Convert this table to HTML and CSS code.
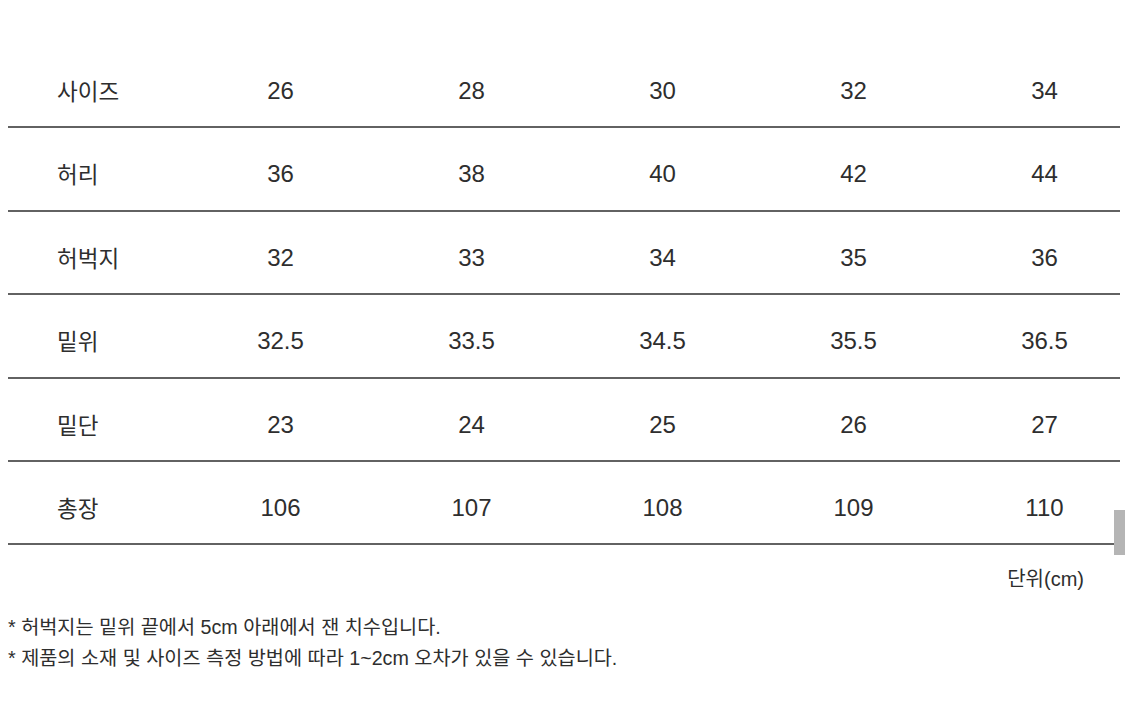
FILE: index.html
```html
<!DOCTYPE html>
<html lang="ko">
<head>
<meta charset="utf-8">
<link rel="stylesheet" href="styles.css">
</head>
<body>
<div class="page">
  <div class="table">
    <div class="row"><div class="label">사이즈</div><div class="cell">26</div><div class="cell">28</div><div class="cell">30</div><div class="cell">32</div><div class="cell">34</div></div>
    <div class="row"><div class="label">허리</div><div class="cell">36</div><div class="cell">38</div><div class="cell">40</div><div class="cell">42</div><div class="cell">44</div></div>
    <div class="row"><div class="label">허벅지</div><div class="cell">32</div><div class="cell">33</div><div class="cell">34</div><div class="cell">35</div><div class="cell">36</div></div>
    <div class="row"><div class="label">밑위</div><div class="cell">32.5</div><div class="cell">33.5</div><div class="cell">34.5</div><div class="cell">35.5</div><div class="cell">36.5</div></div>
    <div class="row"><div class="label">밑단</div><div class="cell">23</div><div class="cell">24</div><div class="cell">25</div><div class="cell">26</div><div class="cell">27</div></div>
    <div class="row"><div class="label">총장</div><div class="cell">106</div><div class="cell">107</div><div class="cell">108</div><div class="cell">109</div><div class="cell">110</div></div>
  </div>
  <div class="unit">단위(cm)</div>
  <div class="notes">
    <p>* 허벅지는 밑위 끝에서 5cm 아래에서 잰 치수입니다.</p>
    <p>* 제품의 소재 및 사이즈 측정 방법에 따라 1~2cm 오차가 있을 수 있습니다.</p>
  </div>
</div>
<div class="scroll-thumb"></div>
</body>
</html>
```
FILE: styles.css
```css
html, body {
  margin: 0;
  padding: 0;
  background: #fff;
  overflow: hidden;
}
body {
  font-family: "Liberation Sans", "Noto Sans CJK KR", sans-serif;
  color: #2e2e2e;
  width: 1125px;
  height: 724px;
  position: relative;
}
.page {
  padding: 45px 0 0 8px;
}
.table {
  width: 1112px;
}
.row {
  display: grid;
  grid-template-columns: 177px repeat(5, 191px);
  height: 81.4px;
  border-bottom: 2px solid #626262;
  box-sizing: content-box;
}
.label, .cell {
  padding-top: 31px;
  line-height: 30px;
  font-size: 24px;
}
.label {
  padding-top: 30px;
  padding-left: 49px;
  font-size: 22.5px;
  font-family: "Noto Sans CJK KR", sans-serif;
}
.cell {
  text-align: center;
}
.unit {
  text-align: right;
  width: 1076px;
  margin-top: 21px;
  font-size: 20px;
  line-height: 26px;
}
.notes {
  margin-top: 20px;
  font-size: 19.7px;
  line-height: 31px;
}
.notes p {
  margin: 0;
}
.scroll-thumb {
  position: absolute;
  left: 1114px;
  top: 510px;
  width: 11px;
  height: 45px;
  background: #b5b5b5;
}
```
